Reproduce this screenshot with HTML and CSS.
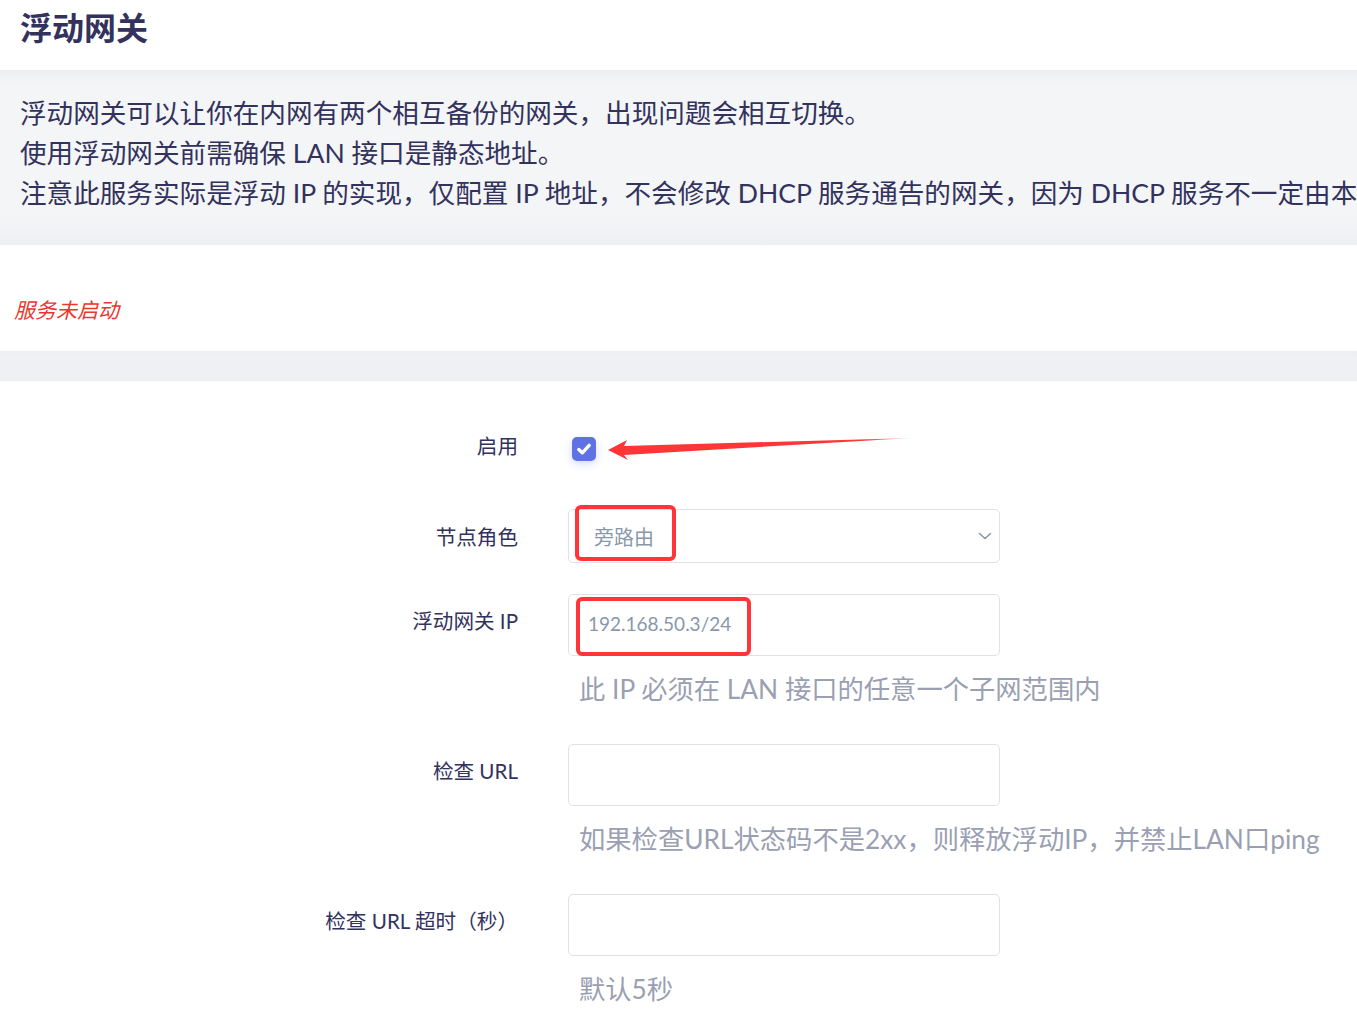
FILE: index.html
```html
<!DOCTYPE html>
<html lang="zh-CN">
<head>
    <meta charset="UTF-8">
    <meta name="viewport" content="width=device-width, initial-scale=1.0">
    <title>浮动网关</title>
    <link rel="stylesheet" href="styles.css">
</head>
<body>
    <div class="page">
        <h2 class="page-title">浮动网关</h2>

        <div class="desc">
            <div>浮动网关可以让你在内网有两个相互备份的网关，出现问题会相互切换。</div>
            <div>使用浮动网关前需确保 LAN 接口是静态地址。</div>
            <div>注意此服务实际是浮动 IP 的实现，仅配置 IP 地址，不会修改 DHCP 服务通告的网关，因为 DHCP 服务不一定由本机提供。</div>
        </div>

        <div class="status"><em>服务未启动</em></div>

        <div class="sep"></div>

        <div class="form">
            <div class="row row-check">
                <label class="row-label">启用</label>
                <div class="row-field">
                    <span class="checkbox">
                        <svg width="16" height="16" viewBox="0 0 16 16"><path d="M2.8 8.6 L6.3 11.8 L13.2 4.4" fill="none" stroke="#fff" stroke-width="3.4" stroke-linecap="round" stroke-linejoin="round"/></svg>
                    </span>
                </div>
            </div>

            <div class="row row-select">
                <label class="row-label">节点角色</label>
                <div class="row-field">
                    <div class="select">
                        <span>旁路由</span>
                        <svg width="14" height="10" viewBox="0 0 14 10"><path d="M1.5 2.5 L7 7.5 L12.5 2.5" fill="none" stroke="#8898aa" stroke-width="1.6" stroke-linecap="round" stroke-linejoin="round"/></svg>
                    </div>
                </div>
            </div>

            <div class="row">
                <label class="row-label">浮动网关 IP</label>
                <div class="row-field">
                    <div class="input">192.168.50.3/24</div>
                    <div class="help">此 IP 必须在 LAN 接口的任意一个子网范围内</div>
                </div>
            </div>

            <div class="row">
                <label class="row-label">检查 URL</label>
                <div class="row-field">
                    <div class="input"></div>
                    <div class="help">如果检查URL状态码不是2xx，则释放浮动IP，并禁止LAN口ping</div>
                </div>
            </div>

            <div class="row">
                <label class="row-label">检查 URL 超时（秒）</label>
                <div class="row-field">
                    <div class="input"></div>
                    <div class="help">默认5秒</div>
                </div>
            </div>
        </div>

        <!-- red annotations drawn over the screenshot -->
        <svg class="marks" width="1357" height="1034" viewBox="0 0 1357 1034">
            <defs>
                <linearGradient id="tail" x1="0" x2="1" y1="0" y2="0">
                    <stop offset="0" stop-color="#ff3538"/>
                    <stop offset="0.85" stop-color="#ff3538"/>
                    <stop offset="1" stop-color="#ff3538" stop-opacity="0.2"/>
                </linearGradient>
            </defs>
            <polygon points="608,450 627,440 624,446 912,438 624,455 628,460" fill="url(#tail)"/>
            <rect x="577" y="507" width="97" height="52" rx="4" fill="none" stroke="#ff3538" stroke-width="4"/>
            <rect x="578" y="599" width="171" height="55" rx="4" fill="none" stroke="#ff3538" stroke-width="4"/>
        </svg>
    </div>
</body>
</html>
```

FILE: styles.css
```css
body {
    margin: 0;
    background: #fff;
    font-family: Lato, "Noto Sans CJK SC", sans-serif;
    color: #32325d;
    overflow: hidden;
}
.page {
    position: relative;
    width: 1357px;
    height: 1034px;
    overflow: hidden;
}
.page-title {
    margin: 0;
    height: 70px;
    padding-left: 20px;
    font-size: 32px;
    line-height: 56px;
    font-weight: bold;
    color: #32325d;
}
.desc {
    height: 175px;
    box-sizing: border-box;
    padding: 23px 0 0 20px;
    background: linear-gradient(#eceef1 0, #f4f5f7 14px, #f4f5f7 150px, #eeeff2 175px);
    font-size: 26.6px;
    line-height: 40px;
    white-space: nowrap;
}
.status {
    height: 106px;
    box-sizing: border-box;
    padding: 50px 0 0 14px;
    font-size: 21px;
    line-height: 30px;
    color: #e8372e;
}
.sep {
    height: 30px;
    background: linear-gradient(#eceef1, #f0f1f4 6px, #eeeff2 30px);
}
.form {
    padding-top: 53px;
}
.row {
    display: flex;
    align-items: flex-start;
    margin-bottom: 38px;
}
.row-check {
    margin-bottom: 48px;
}
.row-select {
    margin-bottom: 31px;
}
.row-label {
    width: 518px;
    flex-shrink: 0;
    text-align: right;
    font-size: 20.6px;
    line-height: 24px;
    padding-top: 15px;
}
.row-check .row-label {
    padding-top: 0;
}
.row-select .row-label {
    padding-top: 16px;
}
.row-field {
    margin-left: 50px;
}
.checkbox {
    display: flex;
    align-items: center;
    justify-content: center;
    width: 24px;
    height: 24px;
    margin: 3px 0 0 4px;
    border-radius: 5px;
    background: #5e72e4;
    box-shadow: 0 3px 8px rgba(94, 114, 228, 0.25);
}
.select,
.input {
    width: 432px;
    box-sizing: border-box;
    border: 1px solid #dee2e6;
    border-radius: 5px;
    background: #fff;
    color: #8898aa;
    font-size: 20px;
}
.select {
    height: 54px;
    display: flex;
    align-items: center;
    justify-content: space-between;
    padding: 0 7px 0 25px;
}
.input {
    height: 62px;
    line-height: 58px;
    padding-left: 19px;
    font-size: 19px;
}
.help {
    margin-top: 16px;
    padding-left: 11px;
    font-size: 26.3px;
    line-height: 34px;
    color: #9a9fb2;
    white-space: nowrap;
}
.marks {
    position: absolute;
    left: 0;
    top: 0;
    pointer-events: none;
}
```
